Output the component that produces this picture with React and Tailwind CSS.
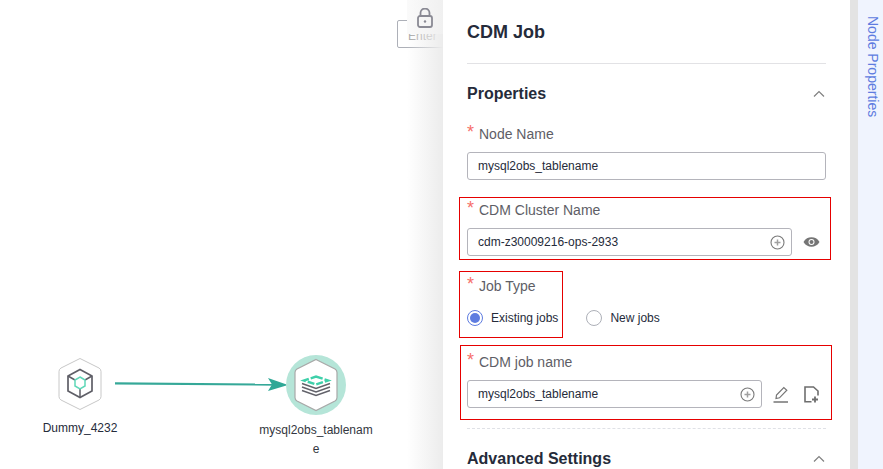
const font = { fontFamily: '"Liberation Sans", Arial, sans-serif' };

const Chevron = () => (
  <svg width="12" height="8" viewBox="0 0 12 8" fill="none" stroke="#808080" strokeWidth="1.2">
    <path d="M1 6.500 6 1.500l5 5" />
  </svg>
);

const PlusCircle = () => (
  <svg width="15" height="15" viewBox="0 0 15 15" fill="none" stroke="#7a7a7a">
    <circle cx="7.500" cy="7.500" r="6.500" strokeWidth="1.100" />
    <path d="M7.500 4.500v6M4.500 7.500h6" stroke="#a0a0a0" strokeWidth="1.500" />
  </svg>
);

const Eye = () => (
  <svg width="17" height="10" viewBox="0 0 17 10">
    <path d="M.5 5C2.500 1.700 5.200.3 8.500.3s6 1.400 8 4.700c-2 3.300-4.700 4.700-8 4.700S2.500 8.300.5 5Z" fill="#757575" />
    <circle cx="8.500" cy="5" r="3" fill="#fff" />
    <circle cx="8.500" cy="5" r="2" fill="#757575" />
  </svg>
);

const Pen = () => (
  <svg width="16" height="17" viewBox="0 0 16 17" fill="none" stroke="#757575" strokeWidth="1.200">
    <path d="M3 12.500 3.500 9 10.800 1.500l3 2.700-7.300 7.600-3.500.7Z" />
    <path d="M.5 16h14.500" strokeWidth="1.500" />
  </svg>
);

const FilePlus = () => (
  <svg width="15" height="17" viewBox="0 0 15 17" fill="none" stroke="#6e6e6e" strokeWidth="1.600">
    <path d="M7.500 15.800H1V1h8.500L14 5v4.500" />
    <path d="M11 10.500v6M8 13.500h6" strokeWidth="1.800" />
  </svg>
);

const Lock = () => (
  <svg width="16" height="20" viewBox="0 0 16 20" fill="none" stroke="#8a8a94" strokeWidth="1.800">
    <rect x="1" y="8" width="14" height="11" rx="2" />
    <path d="M3.500 8V5a4.500 4.500 0 0 1 9 0v3" />
    <circle cx="8" cy="13.500" r="1.200" fill="#8a8a94" stroke="none" />
  </svg>
);

const Label = ({ children }) => (
  <div className="flex items-start h-5 text-[14px] leading-5 text-[#5e5e66]">
    <span className="w-3 text-[18px] leading-4 text-[#f66f6a]">*</span>
    <span>{children}</span>
  </div>
);

const TextBox = ({ value, icon, className }) => (
  <div className={`h-7 flex items-center justify-between pl-[10px] pr-[6px] border border-[#b4b4bb] rounded-[3px] text-[12px] text-[#252b3a] ${className}`}>
    <span>{value}</span>
    {icon && <PlusCircle />}
  </div>
);

const Radio = ({ label, checked }) => (
  <div className="flex items-center gap-2 text-[12px] text-[#252b3a]">
    <span className={`w-4 h-4 rounded-full border flex items-center justify-center ${checked ? 'border-[#5e7ce0]' : 'border-[#adb0b8]'}`}>
      {checked && <span className="w-[10px] h-[10px] rounded-full bg-[#5e7ce0]" />}
    </span>
    {label}
  </div>
);

const Canvas = () => (
  <div className="relative w-[443px] h-full bg-white overflow-hidden">
    {/* locked search box behind the panel */}
    <div className="absolute left-[397px] top-5 w-[60px] h-7 border border-[#adb0b8] rounded-[2px] pl-[10px] pt-[6px] text-[12px] text-[#a8a8a8]">Enter</div>
    <div className="absolute left-[407px] top-0 w-9 h-full bg-gradient-to-r from-white/0 to-[#ececec]" />
    <div className="absolute left-[407px] top-0 w-9 h-[34px] bg-gradient-to-r from-[#fafafa] to-[#f0f0f0]" />
    <div className="absolute left-[417px] top-2"><Lock /></div>

    {/* edge */}
    <svg className="absolute left-[110px] top-[375px]" width="182" height="20" viewBox="0 0 182 20" fill="none">
      <path d="M5 8.300 168 9.700" stroke="#35a898" strokeWidth="2.200" />
      <path d="M158 3 178 10l-20 6 4-6.500Z" fill="#2fa896" />
    </svg>

    {/* Dummy node */}
    <svg className="absolute left-[55px] top-[357px]" width="50" height="54" viewBox="0 0 50 54" fill="#fff">
      <path d="M25 1.500 44 11a4 4 0 0 1 2 3.500v25a4 4 0 0 1-2 3.500L25 52.500 6 43a4 4 0 0 1-2-3.500v-25A4 4 0 0 1 6 11Z" stroke="#c8c8c8" strokeWidth="1" />
      <path d="M25 12.500 37 19v15L25 40.500 13 34V19Z" fill="none" stroke="#5f5f67" strokeWidth="1.700" />
      <path d="M13 19 20 23M37 19 30 23M25 32v8" stroke="#5f5f67" strokeWidth="1.500" />
      <path d="M25 20 30 23v6L25 32 20 29v-6Z" fill="none" stroke="#5fd8b8" strokeWidth="1.500" />
    </svg>
    <div className="absolute left-0 top-[421px] w-40 text-center text-[12px] leading-[14px] text-[#252b3a]">Dummy_4232</div>

    {/* CDM node */}
    <div className="absolute left-[286px] top-[355px] w-[60px] h-[60px] rounded-full bg-[#b5e5d8] flex items-center justify-center">
      <svg width="50" height="54" viewBox="0 0 50 54" fill="#fff">
        <path d="M25 1.500 44 11a4 4 0 0 1 2 3.500v25a4 4 0 0 1-2 3.500L25 52.500 6 43a4 4 0 0 1-2-3.500v-25A4 4 0 0 1 6 11Z" stroke="#a8a8a8" strokeWidth="1.200" />
        <path d="M25 18.500 37 22.500 25 26.500 13 22.500Z" fill="none" stroke="#3fd0aa" strokeWidth="2.400" strokeDasharray="7 2" />
        <path d="M11 25.500 25 30.500l14-5M11 29 25 34l14-5M11 32.500 25 37.500l14-5" fill="none" stroke="#62626a" strokeWidth="1.500" />
      </svg>
    </div>
    <div className="absolute left-[256px] top-[421px] w-[120px] text-center text-[12px] leading-[19px] text-[#333640] break-all">mysql2obs_tablename</div>
  </div>
);

export default function App() {
  return (
    <div className="flex w-[883px] h-[469px] overflow-hidden bg-white" style={font}>
      <Canvas />

      <div className="w-[407px] h-full pl-6 pr-6 bg-white">
        <div className="h-[64px] pt-[2px] flex items-center border-b border-[#e2e2e5] text-[18px] font-bold text-[#252b3a]">CDM Job</div>

        <div className="h-[60px] flex items-center justify-between pr-[1px] text-[16px] font-bold text-[#252b3a]">
          Properties
          <Chevron />
        </div>

        <Label>Node Name</Label>
        <TextBox className="mt-2" value="mysql2obs_tablename" />

        <div className="mt-[17px] -ml-2 w-[372px] h-[63px] border border-[#e60000] pl-[7px] pr-[5px] pt-[2px]">
          <Label>CDM Cluster Name</Label>
          <div className="mt-2 flex items-center">
            <TextBox className="w-[325px]" value="cdm-z30009216-ops-2933" icon />
            <div className="ml-[11px]"><Eye /></div>
          </div>
        </div>

        <div className="mt-[11px] -ml-2 w-[104px] h-[67px] border border-[#e60000] pl-[7px] pt-[4px]">
          <Label>Job Type</Label>
          <div className="mt-[13px] w-[230px] flex gap-[20px]">
            <Radio label="Existing jobs" checked />
            <span className="ml-[8px]"><Radio label="New jobs" /></span>
          </div>
        </div>

        <div className="mt-[7px] -ml-[7px] w-[372px] h-[75px] border border-[#e60000] pl-[6px] pt-[6px]">
          <Label>CDM job name</Label>
          <div className="mt-2 flex items-center">
            <TextBox className="w-[295px]" value="mysql2obs_tablename" icon />
            <div className="ml-[11px]"><Pen /></div>
            <div className="ml-[15px]"><FilePlus /></div>
          </div>
        </div>

        <div className="mt-2 border-t border-dashed border-[#dfe1e6]" />
        <div className="mt-[20px] flex items-center justify-between pr-[1px] text-[16px] leading-5 font-bold text-[#252b3a]">
          Advanced Settings
          <Chevron />
        </div>
      </div>

      <div className="w-2 h-full bg-[#e3e3e3]" />
      <div className="w-[25px] h-full bg-[#f0f4fe] pt-4 pl-[5px] flex justify-center">
        <span className="[writing-mode:vertical-rl] text-[14px] leading-[20px] text-[#5e7ce0]">Node Properties</span>
      </div>
    </div>
  );
}
